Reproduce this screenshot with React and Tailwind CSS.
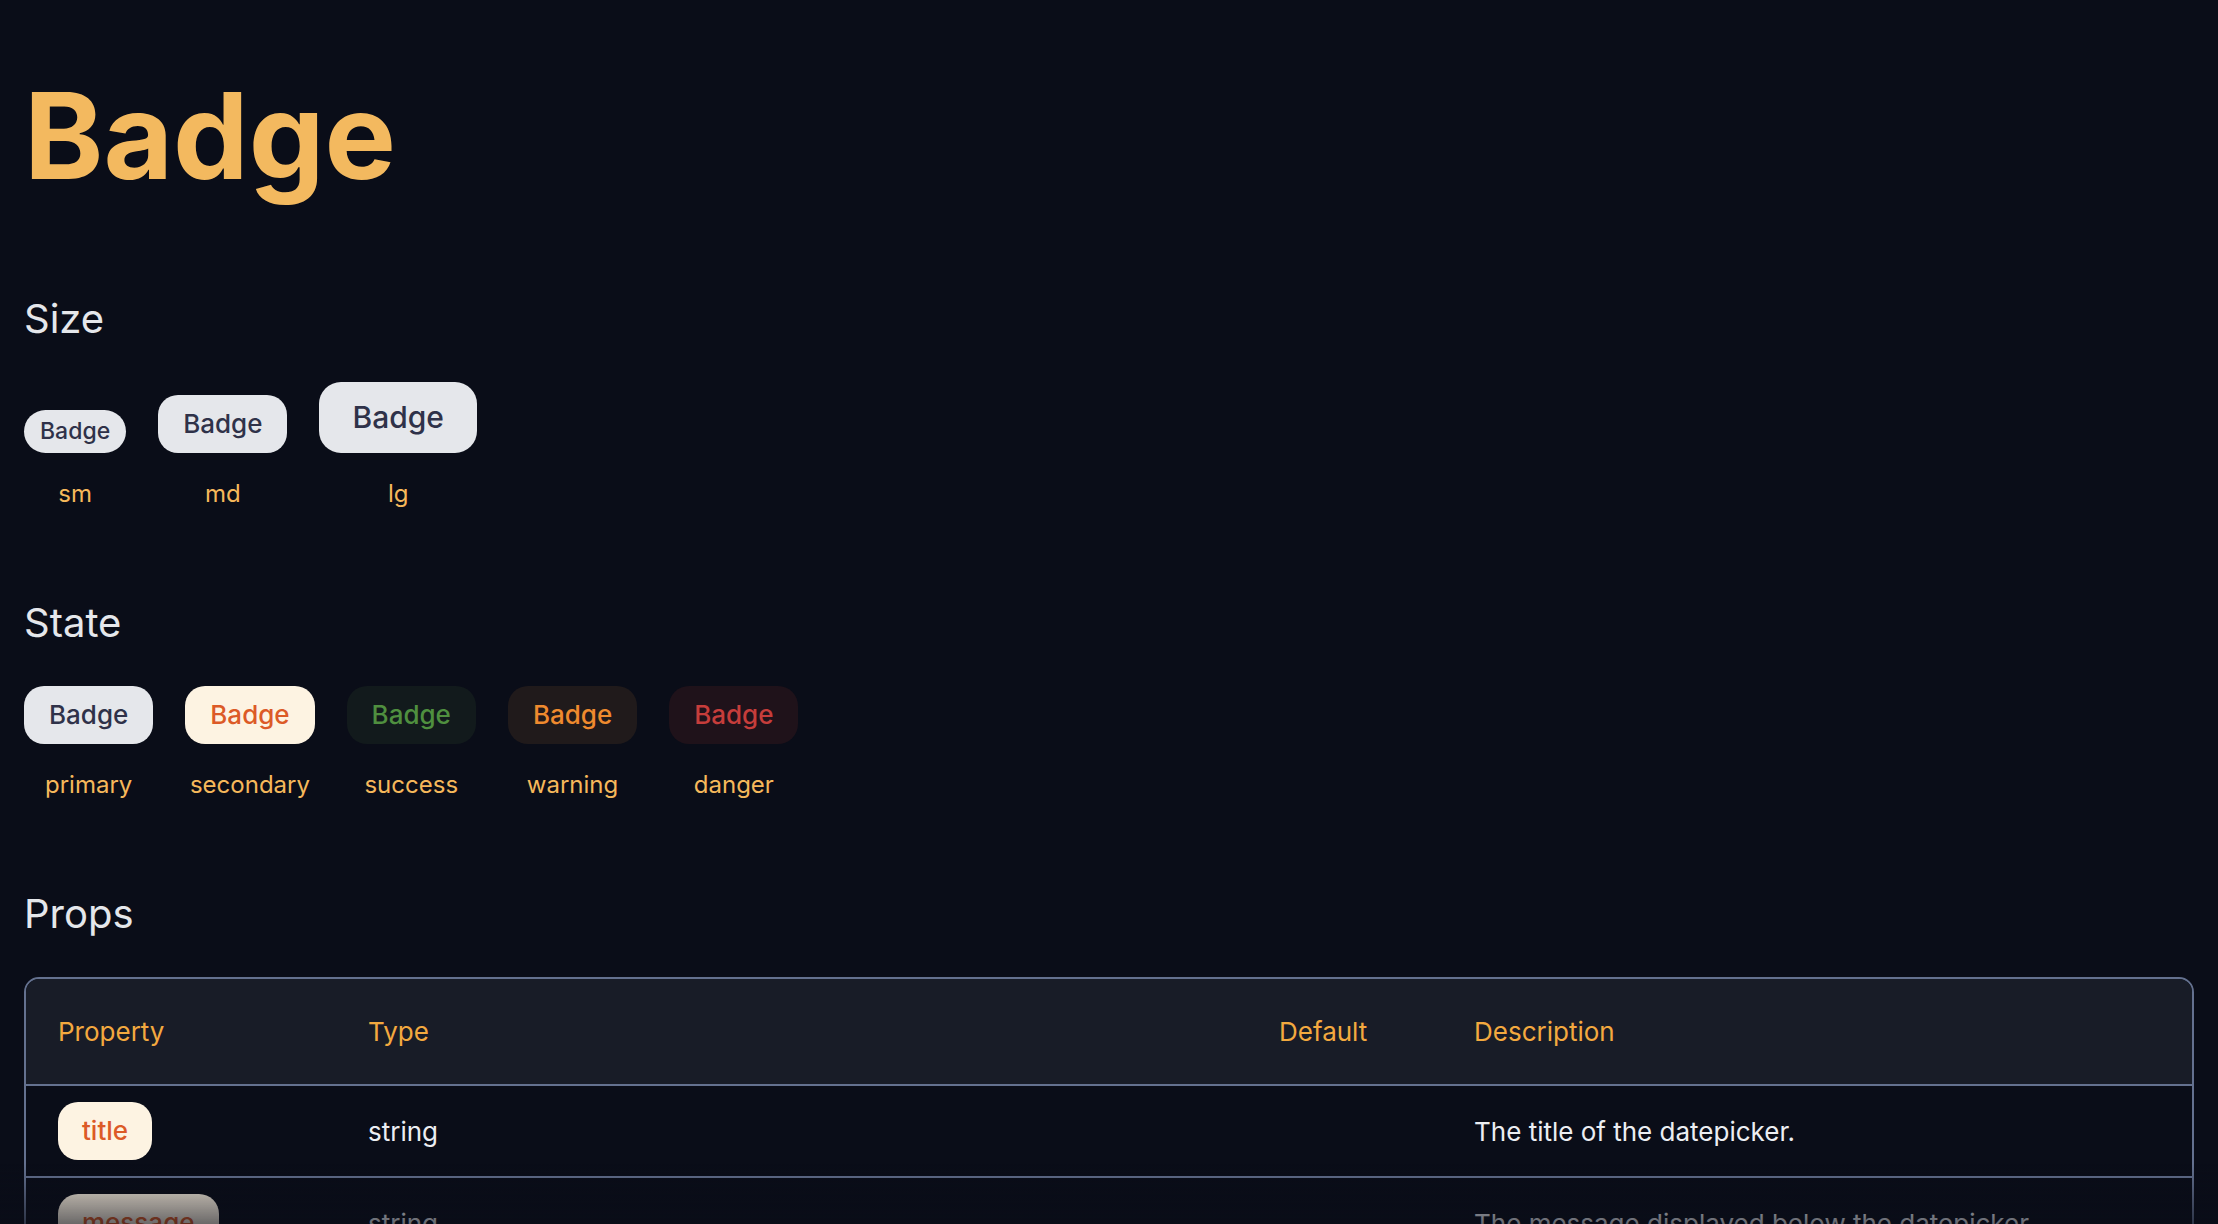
import React from 'react';

const sizes = [
  { label: 'sm', cls: 'text-[23px] leading-[29px] px-4 py-[7px] rounded-full' },
  { label: 'md', cls: 'text-[26px] leading-[40px] px-[25px] py-[9px] rounded-[20px]' },
  { label: 'lg', cls: 'text-[30px] leading-[39px] px-[33px] py-4 rounded-[22px]' },
];

const states = [
  { label: 'primary', cls: 'bg-[#e5e7eb] text-[#2f3249]' },
  { label: 'secondary', cls: 'bg-[#fdf3e2] text-[#dc5a27]' },
  { label: 'success', cls: 'bg-[#121a1c] text-[#4f8f3f]' },
  { label: 'warning', cls: 'bg-[#201a1b] text-[#ef8a2e]' },
  { label: 'danger', cls: 'bg-[#1f121a] text-[#c63d3b]' },
];

const props = [
  { name: 'title', type: 'string', def: '', desc: 'The title of the datepicker.' },
  { name: 'message', type: 'string', def: '', desc: 'The message displayed below the datepicker.' },
  { name: 'state', type: 'string', def: 'primary', desc: 'The state of the badge.' },
  { name: 'size', type: 'string', def: 'md', desc: 'The size of the badge.' },
];

const Section = ({ title, children, className = '' }) => (
  <section className={className}>
    <h2 className="text-[40px] leading-[48px] font-normal text-[#e5e7eb]">{title}</h2>
    <div className="mt-[39px]">{children}</div>
  </section>
);

const Labeled = ({ label, children }) => (
  <div className="flex flex-col items-center gap-[25px]">
    {children}
    <span className="text-[24px] leading-8 text-[#f6b85b]">{label}</span>
  </div>
);

export default function App() {
  return (
    <div className="min-h-screen bg-[#0a0d18] font-['Inter',sans-serif]">
      <main className="px-6 pt-[76px] pb-20">
        <h1 className="text-[120px] leading-[120px] font-bold text-[#f3b95f]">Badge</h1>

        <Section title="Size" className="mt-[99px]">
          <div className="flex items-end gap-8">
            {sizes.map((s) => (
              <Labeled key={s.label} label={s.label}>
                <span className={`bg-[#e5e7eb] text-[#2f3249] font-medium ${s.cls}`}>Badge</span>
              </Labeled>
            ))}
          </div>
        </Section>

        <Section title="State" className="mt-[89px]">
          <div className="flex items-end gap-8">
            {states.map((s) => (
              <Labeled key={s.label} label={s.label}>
                <span className={`text-[26px] leading-[40px] px-[25px] py-[9px] rounded-[20px] font-medium ${s.cls}`}>Badge</span>
              </Labeled>
            ))}
          </div>
        </Section>

        <Section title="Props" className="mt-[89px]">
          <div className="border-2 border-[#64718f] rounded-[15px] overflow-hidden text-[26px] leading-[39px]">
            <div className="grid grid-cols-[310px_911px_195px_1fr] bg-[#181c27] text-[#f3a93f] py-[33px]">
              <div className="pl-[32px]">Property</div>
              <div className="pl-[32px]">Type</div>
              <div className="pl-[32px]">Default</div>
              <div className="pl-[32px]">Description</div>
            </div>
            {props.map((p) => (
              <div key={p.name} className="grid grid-cols-[310px_911px_195px_1fr] items-center border-t-2 border-[#64718f] py-4 text-[#eceef2]">
                <div className="pl-[32px]">
                  <span className="inline-block bg-[#fdf3e2] text-[#dc5a27] font-medium text-[26px] leading-[40px] px-[24px] py-[9px] rounded-[20px]">{p.name}</span>
                </div>
                <div className="pl-[32px]">{p.type}</div>
                <div className="pl-[32px]">{p.def}</div>
                <div className="pl-[32px]">{p.desc}</div>
              </div>
            ))}
          </div>
        </Section>
      </main>
      <div className="fixed inset-x-0 bottom-0 h-[60px] bg-linear-to-b from-transparent to-[#0a0d18]/60 pointer-events-none" />
    </div>
  );
}
